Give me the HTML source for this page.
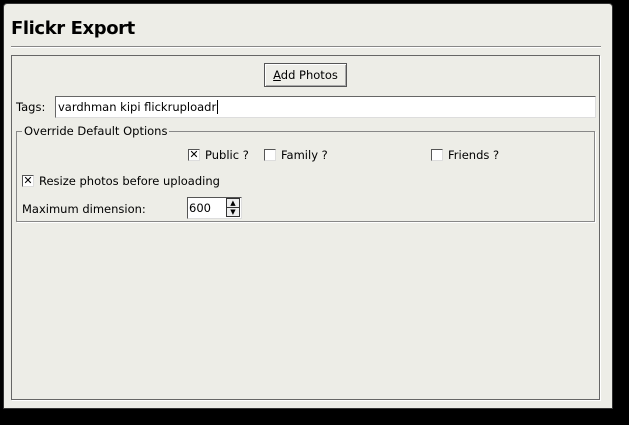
<!DOCTYPE html>
<html><head><style>
*{margin:0;padding:0;box-sizing:border-box}
body{width:629px;height:425px;background:#000;position:relative;overflow:hidden;font-family:"DejaVu Sans","Liberation Sans",sans-serif;font-size:11.5px;color:#000}
.a{position:absolute}
.win{left:3px;top:3px;width:610px;height:406px;background:#edede7;border:1px solid #333;border-radius:4px 4px 0 0}
.cb{width:12px;height:12px;background:#fff;border:1px solid #555;border-right-color:#ddd;border-bottom-color:#ddd;font-size:11px;line-height:10px;text-align:center;font-weight:900}
</style></head><body>
<div class="a win"></div>
<div class="a" style="left:11px;top:18px;font-size:18px;font-weight:bold;letter-spacing:-0.4px">Flickr Export</div>
<div class="a" style="left:11px;top:46px;width:590px;height:2px;border-top:1px solid #888;border-bottom:1px solid #fff"></div>
<div class="a" style="left:11px;top:55px;width:589px;height:345px;border:1px solid #666;box-shadow:1px 1px 0 #fff"></div>
<div class="a" style="left:264px;top:63px;width:83px;height:24px;border:1px solid #555;background:#eeeee8;box-shadow:inset 1px 1px 0 #fff,inset -1px -1px 0 #aaa;text-align:center;line-height:22px"><u>A</u>dd Photos</div>
<div class="a" style="left:16px;top:100px">Tags:</div>
<div class="a" style="left:55px;top:96px;width:541px;height:22px;background:#fff;border:1px solid #666;border-right-color:#ddd;border-bottom-color:#ddd;padding-left:2px;line-height:21px">vardhman kipi flickruploadr<span style="border-left:1px solid #000;margin-left:1px"></span></div>
<div class="a" style="left:16px;top:131px;width:579px;height:91px;border:1px solid #888;box-shadow:1px 1px 0 #fff"></div>
<div class="a" style="left:22px;top:124px;background:#edede7;padding:0 2px">Override Default Options</div>
<div class="a cb" style="left:188px;top:149px">✕</div><div class="a" style="left:205px;top:148px">Public ?</div>
<div class="a cb" style="left:264px;top:149px"></div><div class="a" style="left:281px;top:148px">Family ?</div>
<div class="a cb" style="left:431px;top:149px"></div><div class="a" style="left:448px;top:148px">Friends ?</div>
<div class="a cb" style="left:22px;top:175px">✕</div><div class="a" style="left:39px;top:174px">Resize photos before uploading</div>
<div class="a" style="left:22px;top:202px">Maximum dimension:</div>
<div class="a" style="left:187px;top:197px;width:55px;height:22px;background:#fff;border:1px solid #555;border-right-color:#ddd;border-bottom-color:#ddd;padding-left:1px;line-height:21px">600</div>
<div class="a" style="left:226px;top:198px;width:14px;height:10px;border:1px solid #333;background:#eee;font-size:7px;line-height:8px;text-align:center">▲</div>
<div class="a" style="left:226px;top:207px;width:14px;height:10px;border:1px solid #333;background:#eee;font-size:7px;line-height:8px;text-align:center">▼</div>
</body></html>
